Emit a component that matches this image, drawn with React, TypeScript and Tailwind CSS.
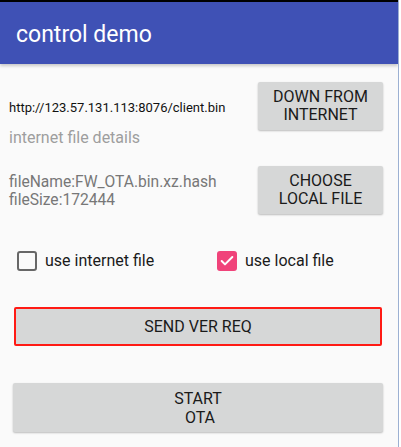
import { Check } from "lucide-react";

const font = { fontFamily: "Roboto, 'Noto Sans', sans-serif" };

function GrayButton({
	children,
	className = "",
}: {
	children: React.ReactNode;
	className?: string;
}) {
	return (
		<button
			type="button"
			className={
				"flex flex-col items-center justify-center rounded-[2px] bg-[#d6d7d7] text-[16px] leading-[18px] text-[#1a1a1a] shadow-[0_1px_2px_rgba(0,0,0,0.25)] " +
				className
			}
		>
			{children}
		</button>
	);
}

export default function App() {
	return (
		<div className="flex h-[447px] w-[401px] overflow-hidden bg-[#fafafa]" style={font}>
			<div className="flex w-[398px] flex-col">
				<div className="h-[2px] bg-black" />
				<header className="flex h-[62px] items-center bg-[#3f51b5] pl-[16px] pt-[5px] shadow-[0_2px_3px_rgba(0,0,0,0.2)]">
					<h1 className="text-[23px] font-normal text-white">control demo</h1>
				</header>

				<section className="flex justify-between pl-[9px] pr-[15px] pt-[18px]">
					<div className="flex flex-col pt-[18px]">
						<span className="text-[13px] leading-[16px] text-[#111]">
							http://123.57.131.113:8076/client.bin
						</span>
						<span className="mt-[13px] text-[16px] leading-[18px] text-[#9e9e9e]">
							internet file details
						</span>
					</div>
					<GrayButton className="h-[48px] w-[125px]">
						<span>DOWN FROM</span>
						<span>INTERNET</span>
					</GrayButton>
				</section>

				<section className="mt-[19px] flex justify-between pl-[9px] pr-[15px]">
					<div className="flex flex-col pt-[7px] text-[15.6px] leading-[18px] text-[#777]">
						<span>fileName:FW_OTA.bin.xz.hash</span>
						<span>fileSize:172444</span>
					</div>
					<GrayButton className="h-[48px] w-[125px]">
						<span>CHOOSE</span>
						<span>LOCAL FILE</span>
					</GrayButton>
				</section>

				<section className="mt-[37px] flex h-[20px] items-center">
					<label className="ml-[17px] flex w-[200px] items-center">
						<span className="h-[20px] w-[20px] rounded-[3px] border-2 border-[#676767]" />
						<span className="ml-[8px] text-[16px] text-[#1a1a1a]">use internet file</span>
					</label>
					<label className="flex items-center">
						<span className="flex h-[20px] w-[20px] items-center justify-center rounded-[3px] bg-[#f0437a]">
							<Check className="h-[16px] w-[16px] text-white" strokeWidth={3} />
						</span>
						<span className="ml-[8px] text-[16px] text-[#1a1a1a]">use local file</span>
					</label>
				</section>

				<div className="ml-[14px] mt-[36px] h-[39px] w-[368px] rounded-[2px] border-[2px] border-[#ff1a14] bg-[#d6d7d7]">
					<div className="flex h-full items-center justify-center text-[16px] text-[#1a1a1a]">
						SEND VER REQ
					</div>
				</div>

				<GrayButton className="ml-[13px] mt-[37px] h-[49px] w-[370px] leading-[19px]">
					<span className="whitespace-pre">START</span>
					<span className="whitespace-pre"> OTA</span>
				</GrayButton>
			</div>
			<div className="w-px bg-[#9cb0d2]" />
			<div className="flex-1 bg-white" />
		</div>
	);
}
